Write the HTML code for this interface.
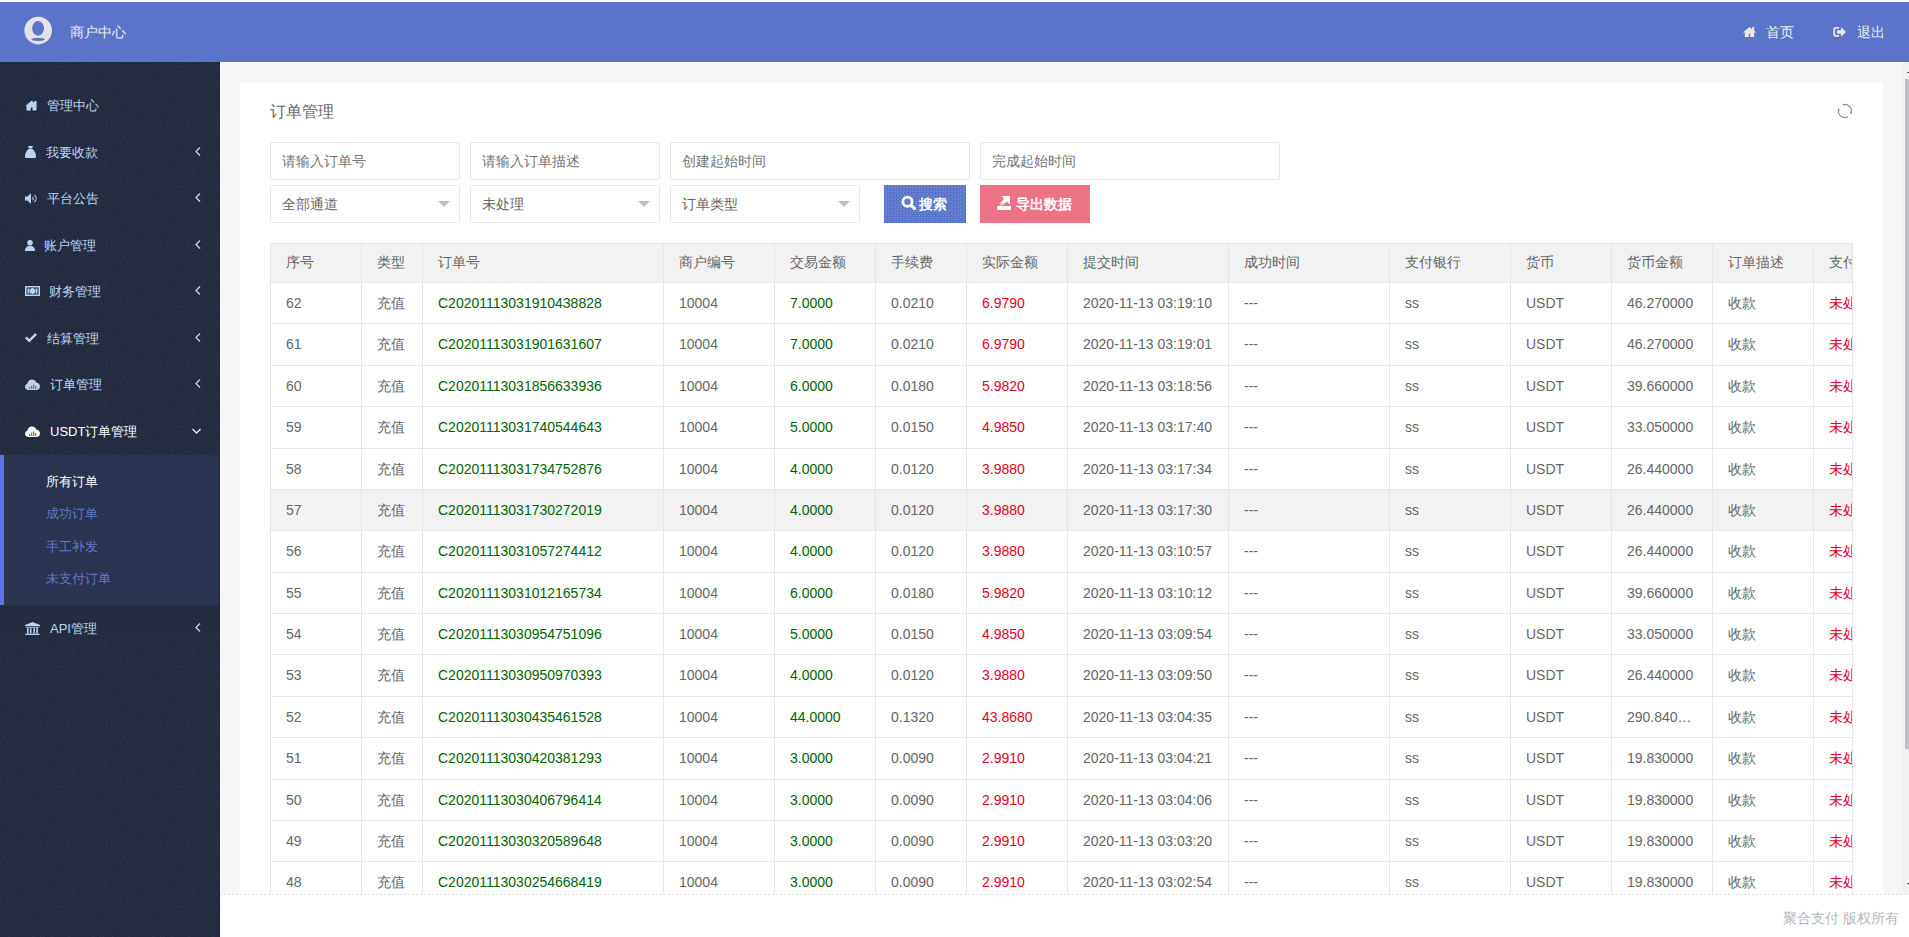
<!DOCTYPE html>
<html><head><meta charset="utf-8">
<style>
*{box-sizing:border-box;margin:0;padding:0}
html,body{width:1909px;height:937px;overflow:hidden;background:#fff;font-family:"Liberation Sans",sans-serif;font-size:14px;color:#666}
.abs{position:absolute}
#hdr{position:absolute;left:0;top:2px;width:1909px;height:60px;background:#5b74c9}
#side{position:absolute;left:0;top:62px;width:220px;height:875px;background:#252b3f;overflow:hidden}
#content{position:absolute;left:221px;top:63px;width:1688px;height:874px;background:#f6f6f6}
#panel{position:absolute;left:240px;top:82px;width:1643px;height:855px;background:#fff}
.mi{position:absolute;left:0;width:220px;height:46px;color:#d6dcec;font-size:13px}
.mi .ic{position:absolute;left:25px;top:0}
.mi .lb{position:absolute;left:47px;top:0;line-height:46px;white-space:nowrap}
.mi .ar{position:absolute;left:194px;top:0}
.sub{position:absolute;left:46px;font-size:13px;color:#5e7bc6;white-space:nowrap}
.inp{position:absolute;height:38px;border:1px solid #e6e6e6;border-radius:2px;background:#fff;color:#757575;padding-left:11px;line-height:36px;white-space:nowrap}
.sel .tri{position:absolute;right:9px;top:15px;width:0;height:0;border-left:6px solid transparent;border-right:6px solid transparent;border-top:6px solid #c0bec3}
.btn{position:absolute;top:185px;height:38px;color:#fff;line-height:38px;white-space:nowrap;font-weight:bold}
#tbl{position:absolute;left:270px;top:243px;width:1583px;height:651px;overflow:hidden}
#tbl .thbg{position:absolute;background:#f2f2f2}
#tbl .hov{position:absolute;background:#f2f2f2}
#tbl .hl{position:absolute;left:0;width:1583px;height:1px;background:#e6e6e6}
#tbl .vl{position:absolute;top:0;width:1px;height:653px;background:#e6e6e6}
#tbl .tx{position:absolute;white-space:nowrap;color:#666}
#tbl .g{color:#006400}
#tbl .r{color:#e3001f}
#footer{position:absolute;left:220px;top:894px;width:1689px;height:43px;background:#fff}
#footer .dl{position:absolute;left:0;top:0;width:1689px;height:1px;background:repeating-linear-gradient(90deg,#dedede 0 2px,transparent 2px 4px)}
#scroll{position:absolute;left:1903px;top:62px;width:6px;height:832px;background:#f1f1f1}
</style></head><body>
<div id="hdr">
  <svg class="abs" style="left:24px;top:14px" width="29" height="29" viewBox="0 0 29 29">
    <circle cx="14.2" cy="14.6" r="13.8" fill="#e3e3e3"/>
    <ellipse cx="14.1" cy="12.4" rx="5.9" ry="7.3" fill="#5b74c9"/>
    <ellipse cx="14.1" cy="23.4" rx="6.7" ry="1.6" fill="#5b74c9"/>
  </svg>
  <div class="abs" style="left:70px;top:0;line-height:60px;color:#eee;font-size:14px">商户中心</div>
  <svg class="abs" style="left:1742px;top:24px" width="15" height="14" viewBox="1742 26 15 14"><path d="M1749.5 27L1742.8 32.5H1744.8V37H1748.8V33.8H1750.2V37H1754.2V32.5H1756.2L1754.2 30.8V27H1752.2V29.2Z" fill="#e8e8e8"/></svg>
  <div class="abs" style="left:1766px;top:0;line-height:60px;color:#eee">首页</div>
  <svg class="abs" style="left:1832px;top:24px" width="15" height="14" viewBox="1832 26 15 14"><path d="M1839 27H1835.5Q1833.3 27 1833.3 29.2V34.6Q1833.3 36.8 1835.5 36.8H1839V35H1835.7Q1835.1 35 1835.1 34.4V29.4Q1835.1 28.8 1835.7 28.8H1839Z M1837 30.3H1841V27L1846 31.9 1841 36.8V33.8H1837Z" fill="#e8e8e8"/></svg>
  <div class="abs" style="left:1857px;top:0;line-height:60px;color:#eee">退出</div>
</div>
<div id="side">
  <svg class="abs" style="left:0;top:0" width="220" height="875"><defs><pattern id="dp" width="60" height="60" patternUnits="userSpaceOnUse"><path d="M20 9h1v1h-1zM25 41h1v1h-1zM3 4h1v1h-1zM52 34h1v1h-1zM6 23h1v1h-1zM37 3h1v1h-1zM58 32h1v1h-1zM13 2h1v1h-1zM5 27h1v1h-1zM26 4h1v1h-1zM15 5h1v1h-1zM35 27h1v1h-1zM3 52h1v1h-1zM36 7h1v1h-1zM14 40h1v1h-1zM40 37h1v1h-1zM3 36h1v1h-1zM37 25h1v1h-1zM3 14h1v1h-1zM54 8h1v1h-1zM18 26h1v1h-1zM9 34h1v1h-1zM7 36h1v1h-1zM19 35h1v1h-1zM52 43h1v1h-1zM11 6h1v1h-1zM37 36h1v1h-1zM40 12h1v1h-1zM23 6h1v1h-1zM35 45h1v1h-1zM3 39h1v1h-1zM13 31h1v1h-1zM43 34h1v1h-1zM27 49h1v1h-1zM20 29h1v1h-1zM37 59h1v1h-1zM29 23h1v1h-1zM19 15h1v1h-1zM50 11h1v1h-1zM44 49h1v1h-1zM36 19h1v1h-1zM33 31h1v1h-1zM56 21h1v1h-1zM46 28h1v1h-1zM18 38h1v1h-1zM4 7h1v1h-1zM32 26h1v1h-1zM10 48h1v1h-1zM26 2h1v1h-1zM42 4h1v1h-1zM48 35h1v1h-1zM36 50h1v1h-1zM56 52h1v1h-1zM20 21h1v1h-1zM44 22h1v1h-1zM38 31h1v1h-1zM29 4h1v1h-1zM53 5h1v1h-1zM17 30h1v1h-1zM44 42h1v1h-1zM46 44h1v1h-1zM19 41h1v1h-1zM36 43h1v1h-1zM52 28h1v1h-1zM18 45h1v1h-1zM24 56h1v1h-1zM42 22h1v1h-1zM1 29h1v1h-1zM22 10h1v1h-1zM39 7h1v1h-1zM31 3h1v1h-1zM13 49h1v1h-1zM18 8h1v1h-1zM47 15h1v1h-1zM25 25h1v1h-1zM58 55h1v1h-1zM31 5h1v1h-1zM10 28h1v1h-1zM25 35h1v1h-1zM17 56h1v1h-1zM8 52h1v1h-1zM27 55h1v1h-1zM35 17h1v1h-1zM45 26h1v1h-1zM22 43h1v1h-1zM56 24h1v1h-1zM14 9h1v1h-1zM5 11h1v1h-1zM9 14h1v1h-1zM42 14h1v1h-1zM0 31h1v1h-1zM53 37h1v1h-1zM11 16h1v1h-1zM18 0h1v1h-1zM9 26h1v1h-1zM34 23h1v1h-1zM44 54h1v1h-1zM32 39h1v1h-1zM41 43h1v1h-1zM47 3h1v1h-1zM29 57h1v1h-1zM55 49h1v1h-1zM55 43h1v1h-1zM6 30h1v1h-1zM40 25h1v1h-1zM3 12h1v1h-1zM28 10h1v1h-1zM7 21h1v1h-1zM6 0h1v1h-1zM36 9h1v1h-1zM34 6h1v1h-1zM23 39h1v1h-1zM1 4h1v1h-1zM55 13h1v1h-1zM9 40h1v1h-1zM16 22h1v1h-1zM38 23h1v1h-1zM30 7h1v1h-1zM7 54h1v1h-1zM31 29h1v1h-1zM19 5h1v1h-1zM9 6h1v1h-1zM47 21h1v1h-1zM30 53h1v1h-1zM44 10h1v1h-1zM33 1h1v1h-1zM13 33h1v1h-1zM58 1h1v1h-1zM48 33h1v1h-1zM55 5h1v1h-1zM16 33h1v1h-1zM23 58h1v1h-1zM10 22h1v1h-1zM49 14h1v1h-1zM34 34h1v1h-1zM21 40h1v1h-1zM51 50h1v1h-1zM48 54h1v1h-1zM12 51h1v1h-1zM15 52h1v1h-1zM25 47h1v1h-1zM51 14h1v1h-1zM31 22h1v1h-1zM46 1h1v1h-1zM1 50h1v1h-1zM16 12h1v1h-1zM44 38h1v1h-1zM22 28h1v1h-1zM51 59h1v1h-1zM12 21h1v1h-1zM39 57h1v1h-1zM39 53h1v1h-1zM58 41h1v1h-1zM22 51h1v1h-1zM7 58h1v1h-1zM24 50h1v1h-1zM56 11h1v1h-1zM40 21h1v1h-1zM5 51h1v1h-1zM29 25h1v1h-1zM47 5h1v1h-1zM46 10h1v1h-1zM10 8h1v1h-1zM1 9h1v1h-1zM37 57h1v1h-1zM29 51h1v1h-1zM41 9h1v1h-1zM42 59h1v1h-1zM8 1h1v1h-1zM46 41h1v1h-1zM6 33h1v1h-1zM47 59h1v1h-1zM52 55h1v1h-1zM18 32h1v1h-1zM15 48h1v1h-1zM26 53h1v1h-1zM8 3h1v1h-1zM58 47h1v1h-1zM29 42h1v1h-1zM37 52h1v1h-1zM32 8h1v1h-1zM34 9h1v1h-1zM1 55h1v1h-1zM11 38h1v1h-1zM51 9h1v1h-1zM30 39h1v1h-1zM46 7h1v1h-1zM35 3h1v1h-1zM20 43h1v1h-1zM35 30h1v1h-1zM6 56h1v1h-1zM17 2h1v1h-1zM49 6h1v1h-1zM35 1h1v1h-1zM48 57h1v1h-1zM58 4h1v1h-1zM28 20h1v1h-1zM12 44h1v1h-1zM17 28h1v1h-1zM32 34h1v1h-1zM51 30h1v1h-1zM32 15h1v1h-1zM56 56h1v1h-1zM59 16h1v1h-1zM59 35h1v1h-1zM7 25h1v1h-1zM4 42h1v1h-1zM15 27h1v1h-1zM42 19h1v1h-1zM57 49h1v1h-1zM9 45h1v1h-1zM8 29h1v1h-1zM56 31h1v1h-1zM10 42h1v1h-1zM53 14h1v1h-1zM27 32h1v1h-1zM25 21h1v1h-1zM26 12h1v1h-1zM22 20h1v1h-1zM5 46h1v1h-1zM23 1h1v1h-1zM21 35h1v1h-1zM29 28h1v1h-1zM14 56h1v1h-1zM6 5h1v1h-1zM16 17h1v1h-1zM2 57h1v1h-1zM17 48h1v1h-1zM58 43h1v1h-1zM52 16h1v1h-1zM25 9h1v1h-1zM34 58h1v1h-1zM32 36h1v1h-1zM31 44h1v1h-1zM40 5h1v1h-1zM5 38h1v1h-1zM4 16h1v1h-1zM29 0h1v1h-1zM26 59h1v1h-1zM2 33h1v1h-1zM45 15h1v1h-1zM7 10h1v1h-1zM11 12h1v1h-1zM59 19h1v1h-1zM40 19h1v1h-1zM33 48h1v1h-1zM13 18h1v1h-1zM51 1h1v1h-1zM0 1h1v1h-1zM46 32h1v1h-1zM35 12h1v1h-1zM15 59h1v1h-1zM28 6h1v1h-1zM42 52h1v1h-1zM41 27h1v1h-1zM42 31h1v1h-1zM34 53h1v1h-1zM32 19h1v1h-1zM44 13h1v1h-1zM14 21h1v1h-1zM12 53h1v1h-1zM56 45h1v1h-1zM22 3h1v1h-1zM40 47h1v1h-1zM56 16h1v1h-1zM32 42h1v1h-1zM15 44h1v1h-1zM19 13h1v1h-1zM0 21h1v1h-1zM30 17h1v1h-1zM5 9h1v1h-1zM25 37h1v1h-1zM2 25h1v1h-1zM1 19h1v1h-1zM37 33h1v1h-1zM50 56h1v1h-1zM9 18h1v1h-1zM46 39h1v1h-1zM53 45h1v1h-1zM51 32h1v1h-1zM53 52h1v1h-1zM43 44h1v1h-1zM40 23h1v1h-1zM40 1h1v1h-1zM40 34h1v1h-1zM51 4h1v1h-1zM32 57h1v1h-1zM47 30h1v1h-1zM4 54h1v1h-1zM16 15h1v1h-1zM46 48h1v1h-1zM13 14h1v1h-1zM29 31h1v1h-1zM54 24h1v1h-1zM4 30h1v1h-1zM40 41h1v1h-1zM12 4h1v1h-1zM38 9h1v1h-1zM21 16h1v1h-1zM44 19h1v1h-1zM43 6h1v1h-1zM29 49h1v1h-1zM28 17h1v1h-1zM24 13h1v1h-1zM58 59h1v1h-1zM37 5h1v1h-1zM23 8h1v1h-1zM40 32h1v1h-1zM7 45h1v1h-1zM10 0h1v1h-1zM22 24h1v1h-1zM20 7h1v1h-1zM53 21h1v1h-1zM0 57h1v1h-1zM47 18h1v1h-1zM4 25h1v1h-1zM17 54h1v1h-1zM6 3h1v1h-1zM59 9h1v1h-1zM49 23h1v1h-1zM50 27h1v1h-1zM56 1h1v1h-1zM51 48h1v1h-1zM13 46h1v1h-1zM26 28h1v1h-1zM55 18h1v1h-1zM10 30h1v1h-1zM18 19h1v1h-1zM16 25h1v1h-1zM25 7h1v1h-1zM10 4h1v1h-1z" fill="#2c3653"/></pattern></defs><rect width="220" height="875" fill="url(#dp)"/></svg>
  <div class="abs" style="left:219px;top:0;width:1px;height:875px;background:#1b2033"></div>
  <div class="abs" style="left:0;top:393px;width:219px;height:150px;background:#2a3350"></div>
<div class="abs" style="left:0;top:393px;width:4px;height:150px;background:#6272e8"></div>
<div class="abs" style="left:0;top:543px;width:219px;height:27px;background:#252b3f"></div>
<div class="abs" style="left:24.5px;top:37.5px;line-height:0"><svg width="13" height="11" viewBox="0 0 13 11"><path d="M6.8 0.6L0.4 6H1.5V10.5H5.8V7.5H7.5V10.5H11.5V6H12.4L11.5 5.2V1H9.2V3.1Z" fill="#b9d3f0"/></svg></div>
<div class="abs" style="left:47px;top:34px;line-height:20px;font-size:13px;color:#b9d3f0;white-space:nowrap">管理中心</div>
<div class="abs" style="left:25px;top:84px;line-height:0"><svg width="11" height="12" viewBox="0 0 11 12"><path d="M3 0h5L7 2.5H4z M3.5 3h4C10 5 11 8 11 10.5 11 11.5 10.5 12 9.5 12h-8C.5 12 0 11.5 0 10.5 0 8 1 5 3.5 3z" fill="#b9d3f0"/></svg></div>
<div class="abs" style="left:46px;top:81px;line-height:20px;font-size:13px;color:#b9d3f0;white-space:nowrap">我要收款</div>
<div class="abs" style="left:195px;top:84.5px;line-height:0"><svg width="6" height="9" viewBox="0 0 6 9"><path d="M5 0.5L1 4.5 5 8.5" stroke="#c0d8f2" stroke-width="1.3" fill="none"/></svg></div>
<div class="abs" style="left:25px;top:130.5px;line-height:0"><svg width="13" height="11" viewBox="0 0 13 11"><path d="M0 3.5h2.5L6 0v11L2.5 7.5H0z M7.5 3.3c.9.5 1.3 1.3 1.3 2.2s-.4 1.7-1.3 2.2z M9.3 1.5c1.5.9 2.4 2.3 2.4 4s-.9 3.1-2.4 4l-.5-.8c1.2-.7 1.9-1.9 1.9-3.2s-.7-2.5-1.9-3.2z" fill="#b9d3f0"/></svg></div>
<div class="abs" style="left:47px;top:127px;line-height:20px;font-size:13px;color:#b9d3f0;white-space:nowrap">平台公告</div>
<div class="abs" style="left:195px;top:130.5px;line-height:0"><svg width="6" height="9" viewBox="0 0 6 9"><path d="M5 0.5L1 4.5 5 8.5" stroke="#c0d8f2" stroke-width="1.3" fill="none"/></svg></div>
<div class="abs" style="left:25px;top:177.5px;line-height:0"><svg width="10" height="11" viewBox="0 0 10 11"><circle cx="5" cy="2.8" r="2.8" fill="#b9d3f0"/><path d="M0 11c0-3 1.5-5 5-5s5 2 5 5z" fill="#b9d3f0"/></svg></div>
<div class="abs" style="left:44px;top:174px;line-height:20px;font-size:13px;color:#b9d3f0;white-space:nowrap">账户管理</div>
<div class="abs" style="left:195px;top:177.5px;line-height:0"><svg width="6" height="9" viewBox="0 0 6 9"><path d="M5 0.5L1 4.5 5 8.5" stroke="#c0d8f2" stroke-width="1.3" fill="none"/></svg></div>
<div class="abs" style="left:25px;top:224px;line-height:0"><svg width="15" height="10" viewBox="0 0 15 10"><path d="M0 0h15v10H0z M1.5 1.5v7h12v-7z" fill="#b9d3f0" fill-rule="evenodd"/><ellipse cx="7.5" cy="5" rx="2.6" ry="3" fill="#b9d3f0"/><path d="M2.5 2.5h2v5h-2z M10.5 2.5h2v5h-2z" fill="#b9d3f0"/></svg></div>
<div class="abs" style="left:49px;top:220px;line-height:20px;font-size:13px;color:#b9d3f0;white-space:nowrap">财务管理</div>
<div class="abs" style="left:195px;top:223.5px;line-height:0"><svg width="6" height="9" viewBox="0 0 6 9"><path d="M5 0.5L1 4.5 5 8.5" stroke="#c0d8f2" stroke-width="1.3" fill="none"/></svg></div>
<div class="abs" style="left:25px;top:271px;line-height:0"><svg width="12" height="10" viewBox="0 0 12 10"><path d="M0 5.2l1.7-1.7 2.6 2.6L10.3 0 12 1.7 4.3 9.5z" fill="#b9d3f0"/></svg></div>
<div class="abs" style="left:47px;top:267px;line-height:20px;font-size:13px;color:#b9d3f0;white-space:nowrap">结算管理</div>
<div class="abs" style="left:195px;top:270.5px;line-height:0"><svg width="6" height="9" viewBox="0 0 6 9"><path d="M5 0.5L1 4.5 5 8.5" stroke="#c0d8f2" stroke-width="1.3" fill="none"/></svg></div>
<div class="abs" style="left:25px;top:316.5px;line-height:0"><svg width="15" height="11" viewBox="0 0 15 11"><path d="M3.5 11C1.5 11 0 9.6 0 7.8c0-1.5 1-2.7 2.4-3C2.6 2.4 4.5.5 7 .5c2 0 3.7 1.2 4.3 3C13.4 3.8 15 5.5 15 7.5 15 9.5 13.4 11 11.5 11z" fill="#b9d3f0"/><path d="M4 10V8h1.3v2z M6 10V6.5h1.3V10z M8 10V5.5h1.3V10z M10 10V7h1.3v3z" fill="#8a7a50"/></svg></div>
<div class="abs" style="left:50px;top:313px;line-height:20px;font-size:13px;color:#b9d3f0;white-space:nowrap">订单管理</div>
<div class="abs" style="left:195px;top:316.5px;line-height:0"><svg width="6" height="9" viewBox="0 0 6 9"><path d="M5 0.5L1 4.5 5 8.5" stroke="#c0d8f2" stroke-width="1.3" fill="none"/></svg></div>
<div class="abs" style="left:25px;top:363.5px;line-height:0"><svg width="15" height="11" viewBox="0 0 15 11"><path d="M3.5 11C1.5 11 0 9.6 0 7.8c0-1.5 1-2.7 2.4-3C2.6 2.4 4.5.5 7 .5c2 0 3.7 1.2 4.3 3C13.4 3.8 15 5.5 15 7.5 15 9.5 13.4 11 11.5 11z" fill="#ffffff"/><path d="M4 10V8h1.3v2z M6 10V6.5h1.3V10z M8 10V5.5h1.3V10z M10 10V7h1.3v3z" fill="#8a7a50"/></svg></div>
<div class="abs" style="left:50px;top:360px;line-height:20px;font-size:13px;color:#ffffff;white-space:nowrap">USDT订单管理</div>
<div class="abs" style="left:192px;top:366px;line-height:0"><svg width="9" height="6" viewBox="0 0 9 6"><path d="M0.5 1L4.5 5 8.5 1" stroke="#e8ecf4" stroke-width="1.4" fill="none"/></svg></div>
<div class="abs" style="left:25px;top:559.5px;line-height:0"><svg width="15" height="13" viewBox="0 0 15 13"><path d="M7.5 0L15 3v1.2H0V3z M1 5h13v.8H1z M2 6.3h1.6v4.7H2z M4.9 6.3h1.6v4.7H4.9z M8.4 6.3h1.6v4.7H8.4z M11.3 6.3h1.6v4.7h-1.6z M0.5 11.5h14V13H.5z" fill="#b9d3f0"/></svg></div>
<div class="abs" style="left:50px;top:557px;line-height:20px;font-size:13px;color:#b9d3f0;white-space:nowrap">API管理</div>
<div class="abs" style="left:195px;top:560.5px;line-height:0"><svg width="6" height="9" viewBox="0 0 6 9"><path d="M5 0.5L1 4.5 5 8.5" stroke="#c0d8f2" stroke-width="1.3" fill="none"/></svg></div>
<div class="abs" style="left:46px;top:410px;line-height:20px;font-size:13px;color:#ffffff;white-space:nowrap">所有订单</div>
<div class="abs" style="left:46px;top:442px;line-height:20px;font-size:13px;color:#5d7cc8;white-space:nowrap">成功订单</div>
<div class="abs" style="left:46px;top:475px;line-height:20px;font-size:13px;color:#5d7cc8;white-space:nowrap">手工补发</div>
<div class="abs" style="left:46px;top:507px;line-height:20px;font-size:13px;color:#5d7cc8;white-space:nowrap">未支付订单</div>
</div>
<div id="content"></div>
<div class="abs" style="left:220px;top:62px;width:1px;height:875px;background:#fff"></div>
<div class="abs" style="left:220px;top:62px;width:1689px;height:1px;background:#fff"></div>
<div id="panel"></div>
<div class="abs" style="left:270px;top:1px;line-height:222px;font-size:16px;color:#666">订单管理</div>
<svg class="abs" style="left:1825px;top:95px" width="40" height="30" viewBox="1825 95 40 30"><path d="M1842.68 104.89A6.5 6.5 0 0 1 1850.79 113.75 M1847.95 116.74A6.5 6.5 0 0 1 1838.79 108.78" stroke="#8c8c8c" stroke-width="1.1" fill="none"/><path d="M1851.6 110.4L1850.8 113.9 M1838.6 111.6L1838.8 108.6" stroke="#8c8c8c" stroke-width="1.2"/></svg>
<div class="inp" style="left:270px;top:142px;width:190px">请输入订单号</div>
<div class="inp" style="left:470px;top:142px;width:190px">请输入订单描述</div>
<div class="inp" style="left:670px;top:142px;width:300px">创建起始时间</div>
<div class="inp" style="left:980px;top:142px;width:300px">完成起始时间</div>
<div class="inp sel" style="left:270px;top:185px;width:190px;color:#666">全部通道<i class="tri"></i></div>
<div class="inp sel" style="left:470px;top:185px;width:190px;color:#666">未处理<i class="tri"></i></div>
<div class="inp sel" style="left:670px;top:185px;width:190px;color:#666">订单类型<i class="tri"></i></div>
<div class="btn" style="left:884px;width:82px;background:#5b74c9"><svg class="abs" style="left:0;top:0" width="82" height="38"><defs><pattern id="bp" width="6" height="4" patternUnits="userSpaceOnUse"><rect x="1" y="0" width="1" height="1" fill="#5fa3d9"/><rect x="4" y="0" width="1" height="1" fill="#5fa3d9"/><rect x="2" y="2" width="1" height="1" fill="#5fa3d9"/><rect x="5" y="2" width="1" height="1" fill="#5fa3d9"/></pattern></defs><rect width="82" height="38" fill="url(#bp)"/></svg><svg class="abs" style="left:0;top:0" width="40" height="38" viewBox="0 0 40 38"><circle cx="23.5" cy="16.8" r="4.6" stroke="#fff" stroke-width="2.8" fill="none"/><path d="M27.2 20.4L30.6 23.6" stroke="#fff" stroke-width="3" stroke-linecap="round"/></svg><span class="abs" style="left:35px">搜索</span></div>
<div class="btn" style="left:980px;width:110px;background:#ec7285"><svg class="abs" style="left:0;top:0" width="40" height="38" viewBox="0 0 40 38"><path d="M17.2 21h13.8v4H17.2z" fill="#fff"/><path d="M21.4 11H30v8.5l-3-3-4.2 3.6-2.4-2.4 3.8-3.8z" fill="#fff"/><path d="M19.8 18.3l2.3 2.3h-2.3z" fill="#fff"/></svg><span class="abs" style="left:36px">导出数据</span></div>
<div id="tbl">
<div class="thbg" style="left:0;top:0;width:1583px;height:39px"></div>
<div class="hov" style="left:0;top:246px;width:1583px;height:41px"></div>
<div class="hl" style="top:0"></div>
<div class="hl" style="top:39px"></div>
<div class="hl" style="top:80px"></div>
<div class="hl" style="top:122px"></div>
<div class="hl" style="top:163px"></div>
<div class="hl" style="top:205px"></div>
<div class="hl" style="top:246px"></div>
<div class="hl" style="top:287px"></div>
<div class="hl" style="top:329px"></div>
<div class="hl" style="top:370px"></div>
<div class="hl" style="top:411px"></div>
<div class="hl" style="top:453px"></div>
<div class="hl" style="top:494px"></div>
<div class="hl" style="top:536px"></div>
<div class="hl" style="top:577px"></div>
<div class="hl" style="top:618px"></div>
<div class="hl" style="top:659px"></div>
<div class="vl" style="left:0px"></div>
<div class="vl" style="left:91px"></div>
<div class="vl" style="left:152px"></div>
<div class="vl" style="left:393px"></div>
<div class="vl" style="left:504px"></div>
<div class="vl" style="left:605px"></div>
<div class="vl" style="left:696px"></div>
<div class="vl" style="left:797px"></div>
<div class="vl" style="left:958px"></div>
<div class="vl" style="left:1119px"></div>
<div class="vl" style="left:1240px"></div>
<div class="vl" style="left:1341px"></div>
<div class="vl" style="left:1442px"></div>
<div class="vl" style="left:1543px"></div>
<div class="vl" style="left:1582px;z-index:2"></div>
<div class="tx th" style="left:16px;top:0;height:39px;line-height:39px">序号</div>
<div class="tx th" style="left:107px;top:0;height:39px;line-height:39px">类型</div>
<div class="tx th" style="left:168px;top:0;height:39px;line-height:39px">订单号</div>
<div class="tx th" style="left:409px;top:0;height:39px;line-height:39px">商户编号</div>
<div class="tx th" style="left:520px;top:0;height:39px;line-height:39px">交易金额</div>
<div class="tx th" style="left:621px;top:0;height:39px;line-height:39px">手续费</div>
<div class="tx th" style="left:712px;top:0;height:39px;line-height:39px">实际金额</div>
<div class="tx th" style="left:813px;top:0;height:39px;line-height:39px">提交时间</div>
<div class="tx th" style="left:974px;top:0;height:39px;line-height:39px">成功时间</div>
<div class="tx th" style="left:1135px;top:0;height:39px;line-height:39px">支付银行</div>
<div class="tx th" style="left:1256px;top:0;height:39px;line-height:39px">货币</div>
<div class="tx th" style="left:1357px;top:0;height:39px;line-height:39px">货币金额</div>
<div class="tx th" style="left:1458px;top:0;height:39px;line-height:39px">订单描述</div>
<div class="tx th" style="left:1559px;top:0;height:39px;line-height:39px">支付状态</div>
<div class="tx " style="left:16px;top:40px;height:40px;line-height:40px">62</div>
<div class="tx " style="left:107px;top:40px;height:40px;line-height:40px">充值</div>
<div class="tx g" style="left:168px;top:40px;height:40px;line-height:40px">C20201113031910438828</div>
<div class="tx " style="left:409px;top:40px;height:40px;line-height:40px">10004</div>
<div class="tx g" style="left:520px;top:40px;height:40px;line-height:40px">7.0000</div>
<div class="tx " style="left:621px;top:40px;height:40px;line-height:40px">0.0210</div>
<div class="tx r" style="left:712px;top:40px;height:40px;line-height:40px">6.9790</div>
<div class="tx " style="left:813px;top:40px;height:40px;line-height:40px">2020-11-13 03:19:10</div>
<div class="tx " style="left:974px;top:40px;height:40px;line-height:40px">---</div>
<div class="tx " style="left:1135px;top:40px;height:40px;line-height:40px">ss</div>
<div class="tx " style="left:1256px;top:40px;height:40px;line-height:40px">USDT</div>
<div class="tx " style="left:1357px;top:40px;height:40px;line-height:40px">46.270000</div>
<div class="tx " style="left:1458px;top:40px;height:40px;line-height:40px">收款</div>
<div class="tx r" style="left:1559px;top:40px;height:40px;line-height:40px">未处理</div>
<div class="tx " style="left:16px;top:81px;height:41px;line-height:41px">61</div>
<div class="tx " style="left:107px;top:81px;height:41px;line-height:41px">充值</div>
<div class="tx g" style="left:168px;top:81px;height:41px;line-height:41px">C20201113031901631607</div>
<div class="tx " style="left:409px;top:81px;height:41px;line-height:41px">10004</div>
<div class="tx g" style="left:520px;top:81px;height:41px;line-height:41px">7.0000</div>
<div class="tx " style="left:621px;top:81px;height:41px;line-height:41px">0.0210</div>
<div class="tx r" style="left:712px;top:81px;height:41px;line-height:41px">6.9790</div>
<div class="tx " style="left:813px;top:81px;height:41px;line-height:41px">2020-11-13 03:19:01</div>
<div class="tx " style="left:974px;top:81px;height:41px;line-height:41px">---</div>
<div class="tx " style="left:1135px;top:81px;height:41px;line-height:41px">ss</div>
<div class="tx " style="left:1256px;top:81px;height:41px;line-height:41px">USDT</div>
<div class="tx " style="left:1357px;top:81px;height:41px;line-height:41px">46.270000</div>
<div class="tx " style="left:1458px;top:81px;height:41px;line-height:41px">收款</div>
<div class="tx r" style="left:1559px;top:81px;height:41px;line-height:41px">未处理</div>
<div class="tx " style="left:16px;top:123px;height:40px;line-height:40px">60</div>
<div class="tx " style="left:107px;top:123px;height:40px;line-height:40px">充值</div>
<div class="tx g" style="left:168px;top:123px;height:40px;line-height:40px">C20201113031856633936</div>
<div class="tx " style="left:409px;top:123px;height:40px;line-height:40px">10004</div>
<div class="tx g" style="left:520px;top:123px;height:40px;line-height:40px">6.0000</div>
<div class="tx " style="left:621px;top:123px;height:40px;line-height:40px">0.0180</div>
<div class="tx r" style="left:712px;top:123px;height:40px;line-height:40px">5.9820</div>
<div class="tx " style="left:813px;top:123px;height:40px;line-height:40px">2020-11-13 03:18:56</div>
<div class="tx " style="left:974px;top:123px;height:40px;line-height:40px">---</div>
<div class="tx " style="left:1135px;top:123px;height:40px;line-height:40px">ss</div>
<div class="tx " style="left:1256px;top:123px;height:40px;line-height:40px">USDT</div>
<div class="tx " style="left:1357px;top:123px;height:40px;line-height:40px">39.660000</div>
<div class="tx " style="left:1458px;top:123px;height:40px;line-height:40px">收款</div>
<div class="tx r" style="left:1559px;top:123px;height:40px;line-height:40px">未处理</div>
<div class="tx " style="left:16px;top:164px;height:41px;line-height:41px">59</div>
<div class="tx " style="left:107px;top:164px;height:41px;line-height:41px">充值</div>
<div class="tx g" style="left:168px;top:164px;height:41px;line-height:41px">C20201113031740544643</div>
<div class="tx " style="left:409px;top:164px;height:41px;line-height:41px">10004</div>
<div class="tx g" style="left:520px;top:164px;height:41px;line-height:41px">5.0000</div>
<div class="tx " style="left:621px;top:164px;height:41px;line-height:41px">0.0150</div>
<div class="tx r" style="left:712px;top:164px;height:41px;line-height:41px">4.9850</div>
<div class="tx " style="left:813px;top:164px;height:41px;line-height:41px">2020-11-13 03:17:40</div>
<div class="tx " style="left:974px;top:164px;height:41px;line-height:41px">---</div>
<div class="tx " style="left:1135px;top:164px;height:41px;line-height:41px">ss</div>
<div class="tx " style="left:1256px;top:164px;height:41px;line-height:41px">USDT</div>
<div class="tx " style="left:1357px;top:164px;height:41px;line-height:41px">33.050000</div>
<div class="tx " style="left:1458px;top:164px;height:41px;line-height:41px">收款</div>
<div class="tx r" style="left:1559px;top:164px;height:41px;line-height:41px">未处理</div>
<div class="tx " style="left:16px;top:206px;height:40px;line-height:40px">58</div>
<div class="tx " style="left:107px;top:206px;height:40px;line-height:40px">充值</div>
<div class="tx g" style="left:168px;top:206px;height:40px;line-height:40px">C20201113031734752876</div>
<div class="tx " style="left:409px;top:206px;height:40px;line-height:40px">10004</div>
<div class="tx g" style="left:520px;top:206px;height:40px;line-height:40px">4.0000</div>
<div class="tx " style="left:621px;top:206px;height:40px;line-height:40px">0.0120</div>
<div class="tx r" style="left:712px;top:206px;height:40px;line-height:40px">3.9880</div>
<div class="tx " style="left:813px;top:206px;height:40px;line-height:40px">2020-11-13 03:17:34</div>
<div class="tx " style="left:974px;top:206px;height:40px;line-height:40px">---</div>
<div class="tx " style="left:1135px;top:206px;height:40px;line-height:40px">ss</div>
<div class="tx " style="left:1256px;top:206px;height:40px;line-height:40px">USDT</div>
<div class="tx " style="left:1357px;top:206px;height:40px;line-height:40px">26.440000</div>
<div class="tx " style="left:1458px;top:206px;height:40px;line-height:40px">收款</div>
<div class="tx r" style="left:1559px;top:206px;height:40px;line-height:40px">未处理</div>
<div class="tx " style="left:16px;top:247px;height:40px;line-height:40px">57</div>
<div class="tx " style="left:107px;top:247px;height:40px;line-height:40px">充值</div>
<div class="tx g" style="left:168px;top:247px;height:40px;line-height:40px">C20201113031730272019</div>
<div class="tx " style="left:409px;top:247px;height:40px;line-height:40px">10004</div>
<div class="tx g" style="left:520px;top:247px;height:40px;line-height:40px">4.0000</div>
<div class="tx " style="left:621px;top:247px;height:40px;line-height:40px">0.0120</div>
<div class="tx r" style="left:712px;top:247px;height:40px;line-height:40px">3.9880</div>
<div class="tx " style="left:813px;top:247px;height:40px;line-height:40px">2020-11-13 03:17:30</div>
<div class="tx " style="left:974px;top:247px;height:40px;line-height:40px">---</div>
<div class="tx " style="left:1135px;top:247px;height:40px;line-height:40px">ss</div>
<div class="tx " style="left:1256px;top:247px;height:40px;line-height:40px">USDT</div>
<div class="tx " style="left:1357px;top:247px;height:40px;line-height:40px">26.440000</div>
<div class="tx " style="left:1458px;top:247px;height:40px;line-height:40px">收款</div>
<div class="tx r" style="left:1559px;top:247px;height:40px;line-height:40px">未处理</div>
<div class="tx " style="left:16px;top:288px;height:41px;line-height:41px">56</div>
<div class="tx " style="left:107px;top:288px;height:41px;line-height:41px">充值</div>
<div class="tx g" style="left:168px;top:288px;height:41px;line-height:41px">C20201113031057274412</div>
<div class="tx " style="left:409px;top:288px;height:41px;line-height:41px">10004</div>
<div class="tx g" style="left:520px;top:288px;height:41px;line-height:41px">4.0000</div>
<div class="tx " style="left:621px;top:288px;height:41px;line-height:41px">0.0120</div>
<div class="tx r" style="left:712px;top:288px;height:41px;line-height:41px">3.9880</div>
<div class="tx " style="left:813px;top:288px;height:41px;line-height:41px">2020-11-13 03:10:57</div>
<div class="tx " style="left:974px;top:288px;height:41px;line-height:41px">---</div>
<div class="tx " style="left:1135px;top:288px;height:41px;line-height:41px">ss</div>
<div class="tx " style="left:1256px;top:288px;height:41px;line-height:41px">USDT</div>
<div class="tx " style="left:1357px;top:288px;height:41px;line-height:41px">26.440000</div>
<div class="tx " style="left:1458px;top:288px;height:41px;line-height:41px">收款</div>
<div class="tx r" style="left:1559px;top:288px;height:41px;line-height:41px">未处理</div>
<div class="tx " style="left:16px;top:330px;height:40px;line-height:40px">55</div>
<div class="tx " style="left:107px;top:330px;height:40px;line-height:40px">充值</div>
<div class="tx g" style="left:168px;top:330px;height:40px;line-height:40px">C20201113031012165734</div>
<div class="tx " style="left:409px;top:330px;height:40px;line-height:40px">10004</div>
<div class="tx g" style="left:520px;top:330px;height:40px;line-height:40px">6.0000</div>
<div class="tx " style="left:621px;top:330px;height:40px;line-height:40px">0.0180</div>
<div class="tx r" style="left:712px;top:330px;height:40px;line-height:40px">5.9820</div>
<div class="tx " style="left:813px;top:330px;height:40px;line-height:40px">2020-11-13 03:10:12</div>
<div class="tx " style="left:974px;top:330px;height:40px;line-height:40px">---</div>
<div class="tx " style="left:1135px;top:330px;height:40px;line-height:40px">ss</div>
<div class="tx " style="left:1256px;top:330px;height:40px;line-height:40px">USDT</div>
<div class="tx " style="left:1357px;top:330px;height:40px;line-height:40px">39.660000</div>
<div class="tx " style="left:1458px;top:330px;height:40px;line-height:40px">收款</div>
<div class="tx r" style="left:1559px;top:330px;height:40px;line-height:40px">未处理</div>
<div class="tx " style="left:16px;top:371px;height:40px;line-height:40px">54</div>
<div class="tx " style="left:107px;top:371px;height:40px;line-height:40px">充值</div>
<div class="tx g" style="left:168px;top:371px;height:40px;line-height:40px">C20201113030954751096</div>
<div class="tx " style="left:409px;top:371px;height:40px;line-height:40px">10004</div>
<div class="tx g" style="left:520px;top:371px;height:40px;line-height:40px">5.0000</div>
<div class="tx " style="left:621px;top:371px;height:40px;line-height:40px">0.0150</div>
<div class="tx r" style="left:712px;top:371px;height:40px;line-height:40px">4.9850</div>
<div class="tx " style="left:813px;top:371px;height:40px;line-height:40px">2020-11-13 03:09:54</div>
<div class="tx " style="left:974px;top:371px;height:40px;line-height:40px">---</div>
<div class="tx " style="left:1135px;top:371px;height:40px;line-height:40px">ss</div>
<div class="tx " style="left:1256px;top:371px;height:40px;line-height:40px">USDT</div>
<div class="tx " style="left:1357px;top:371px;height:40px;line-height:40px">33.050000</div>
<div class="tx " style="left:1458px;top:371px;height:40px;line-height:40px">收款</div>
<div class="tx r" style="left:1559px;top:371px;height:40px;line-height:40px">未处理</div>
<div class="tx " style="left:16px;top:412px;height:41px;line-height:41px">53</div>
<div class="tx " style="left:107px;top:412px;height:41px;line-height:41px">充值</div>
<div class="tx g" style="left:168px;top:412px;height:41px;line-height:41px">C20201113030950970393</div>
<div class="tx " style="left:409px;top:412px;height:41px;line-height:41px">10004</div>
<div class="tx g" style="left:520px;top:412px;height:41px;line-height:41px">4.0000</div>
<div class="tx " style="left:621px;top:412px;height:41px;line-height:41px">0.0120</div>
<div class="tx r" style="left:712px;top:412px;height:41px;line-height:41px">3.9880</div>
<div class="tx " style="left:813px;top:412px;height:41px;line-height:41px">2020-11-13 03:09:50</div>
<div class="tx " style="left:974px;top:412px;height:41px;line-height:41px">---</div>
<div class="tx " style="left:1135px;top:412px;height:41px;line-height:41px">ss</div>
<div class="tx " style="left:1256px;top:412px;height:41px;line-height:41px">USDT</div>
<div class="tx " style="left:1357px;top:412px;height:41px;line-height:41px">26.440000</div>
<div class="tx " style="left:1458px;top:412px;height:41px;line-height:41px">收款</div>
<div class="tx r" style="left:1559px;top:412px;height:41px;line-height:41px">未处理</div>
<div class="tx " style="left:16px;top:454px;height:40px;line-height:40px">52</div>
<div class="tx " style="left:107px;top:454px;height:40px;line-height:40px">充值</div>
<div class="tx g" style="left:168px;top:454px;height:40px;line-height:40px">C20201113030435461528</div>
<div class="tx " style="left:409px;top:454px;height:40px;line-height:40px">10004</div>
<div class="tx g" style="left:520px;top:454px;height:40px;line-height:40px">44.0000</div>
<div class="tx " style="left:621px;top:454px;height:40px;line-height:40px">0.1320</div>
<div class="tx r" style="left:712px;top:454px;height:40px;line-height:40px">43.8680</div>
<div class="tx " style="left:813px;top:454px;height:40px;line-height:40px">2020-11-13 03:04:35</div>
<div class="tx " style="left:974px;top:454px;height:40px;line-height:40px">---</div>
<div class="tx " style="left:1135px;top:454px;height:40px;line-height:40px">ss</div>
<div class="tx " style="left:1256px;top:454px;height:40px;line-height:40px">USDT</div>
<div class="tx " style="left:1357px;top:454px;height:40px;line-height:40px">290.840…</div>
<div class="tx " style="left:1458px;top:454px;height:40px;line-height:40px">收款</div>
<div class="tx r" style="left:1559px;top:454px;height:40px;line-height:40px">未处理</div>
<div class="tx " style="left:16px;top:495px;height:41px;line-height:41px">51</div>
<div class="tx " style="left:107px;top:495px;height:41px;line-height:41px">充值</div>
<div class="tx g" style="left:168px;top:495px;height:41px;line-height:41px">C20201113030420381293</div>
<div class="tx " style="left:409px;top:495px;height:41px;line-height:41px">10004</div>
<div class="tx g" style="left:520px;top:495px;height:41px;line-height:41px">3.0000</div>
<div class="tx " style="left:621px;top:495px;height:41px;line-height:41px">0.0090</div>
<div class="tx r" style="left:712px;top:495px;height:41px;line-height:41px">2.9910</div>
<div class="tx " style="left:813px;top:495px;height:41px;line-height:41px">2020-11-13 03:04:21</div>
<div class="tx " style="left:974px;top:495px;height:41px;line-height:41px">---</div>
<div class="tx " style="left:1135px;top:495px;height:41px;line-height:41px">ss</div>
<div class="tx " style="left:1256px;top:495px;height:41px;line-height:41px">USDT</div>
<div class="tx " style="left:1357px;top:495px;height:41px;line-height:41px">19.830000</div>
<div class="tx " style="left:1458px;top:495px;height:41px;line-height:41px">收款</div>
<div class="tx r" style="left:1559px;top:495px;height:41px;line-height:41px">未处理</div>
<div class="tx " style="left:16px;top:537px;height:40px;line-height:40px">50</div>
<div class="tx " style="left:107px;top:537px;height:40px;line-height:40px">充值</div>
<div class="tx g" style="left:168px;top:537px;height:40px;line-height:40px">C20201113030406796414</div>
<div class="tx " style="left:409px;top:537px;height:40px;line-height:40px">10004</div>
<div class="tx g" style="left:520px;top:537px;height:40px;line-height:40px">3.0000</div>
<div class="tx " style="left:621px;top:537px;height:40px;line-height:40px">0.0090</div>
<div class="tx r" style="left:712px;top:537px;height:40px;line-height:40px">2.9910</div>
<div class="tx " style="left:813px;top:537px;height:40px;line-height:40px">2020-11-13 03:04:06</div>
<div class="tx " style="left:974px;top:537px;height:40px;line-height:40px">---</div>
<div class="tx " style="left:1135px;top:537px;height:40px;line-height:40px">ss</div>
<div class="tx " style="left:1256px;top:537px;height:40px;line-height:40px">USDT</div>
<div class="tx " style="left:1357px;top:537px;height:40px;line-height:40px">19.830000</div>
<div class="tx " style="left:1458px;top:537px;height:40px;line-height:40px">收款</div>
<div class="tx r" style="left:1559px;top:537px;height:40px;line-height:40px">未处理</div>
<div class="tx " style="left:16px;top:578px;height:40px;line-height:40px">49</div>
<div class="tx " style="left:107px;top:578px;height:40px;line-height:40px">充值</div>
<div class="tx g" style="left:168px;top:578px;height:40px;line-height:40px">C20201113030320589648</div>
<div class="tx " style="left:409px;top:578px;height:40px;line-height:40px">10004</div>
<div class="tx g" style="left:520px;top:578px;height:40px;line-height:40px">3.0000</div>
<div class="tx " style="left:621px;top:578px;height:40px;line-height:40px">0.0090</div>
<div class="tx r" style="left:712px;top:578px;height:40px;line-height:40px">2.9910</div>
<div class="tx " style="left:813px;top:578px;height:40px;line-height:40px">2020-11-13 03:03:20</div>
<div class="tx " style="left:974px;top:578px;height:40px;line-height:40px">---</div>
<div class="tx " style="left:1135px;top:578px;height:40px;line-height:40px">ss</div>
<div class="tx " style="left:1256px;top:578px;height:40px;line-height:40px">USDT</div>
<div class="tx " style="left:1357px;top:578px;height:40px;line-height:40px">19.830000</div>
<div class="tx " style="left:1458px;top:578px;height:40px;line-height:40px">收款</div>
<div class="tx r" style="left:1559px;top:578px;height:40px;line-height:40px">未处理</div>
<div class="tx " style="left:16px;top:619px;height:40px;line-height:40px">48</div>
<div class="tx " style="left:107px;top:619px;height:40px;line-height:40px">充值</div>
<div class="tx g" style="left:168px;top:619px;height:40px;line-height:40px">C20201113030254668419</div>
<div class="tx " style="left:409px;top:619px;height:40px;line-height:40px">10004</div>
<div class="tx g" style="left:520px;top:619px;height:40px;line-height:40px">3.0000</div>
<div class="tx " style="left:621px;top:619px;height:40px;line-height:40px">0.0090</div>
<div class="tx r" style="left:712px;top:619px;height:40px;line-height:40px">2.9910</div>
<div class="tx " style="left:813px;top:619px;height:40px;line-height:40px">2020-11-13 03:02:54</div>
<div class="tx " style="left:974px;top:619px;height:40px;line-height:40px">---</div>
<div class="tx " style="left:1135px;top:619px;height:40px;line-height:40px">ss</div>
<div class="tx " style="left:1256px;top:619px;height:40px;line-height:40px">USDT</div>
<div class="tx " style="left:1357px;top:619px;height:40px;line-height:40px">19.830000</div>
<div class="tx " style="left:1458px;top:619px;height:40px;line-height:40px">收款</div>
<div class="tx r" style="left:1559px;top:619px;height:40px;line-height:40px">未处理</div>
</div>
<div id="footer"><div class="dl"></div><div class="abs" style="right:10px;top:1px;line-height:46px;color:#b3b8c0;font-size:14px">聚合支付 版权所有</div></div>
<div id="scroll"><div class="abs" style="left:2px;top:17px;width:4px;height:670px;background:#c1bfc4"></div><div class="abs" style="left:4px;top:10px;width:2px;height:1px;background:#555"></div><div class="abs" style="left:4px;top:821px;width:2px;height:1px;background:#555"></div></div>
</body></html>
